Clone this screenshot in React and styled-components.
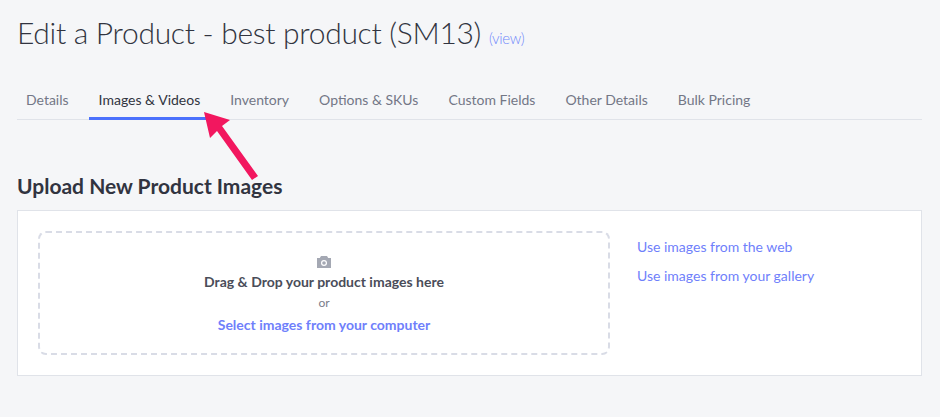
import React from 'react';
import styled, { createGlobalStyle } from 'styled-components';

const Global = createGlobalStyle`
  body { margin: 0; background: #f5f6f8; font-family: Lato, "Open Sans", sans-serif; }
`;

const tabs = ['Details', 'Images & Videos', 'Inventory', 'Options & SKUs', 'Custom Fields', 'Other Details', 'Bulk Pricing'];

const App = () => (
  <Page>
    <Global />
    <Title>
      Edit a Product - best product (SM13) <ViewLink>(view)</ViewLink>
    </Title>
    <Tabs>
      {tabs.map((t, i) => (
        <Tab key={t} active={i === 1}>{t}</Tab>
      ))}
    </Tabs>
    <Heading>Upload New Product Images</Heading>
    <Panel>
      <DropZone>
        <svg width="16" height="14" viewBox="0 0 16 14">
          <path d="M5 1h6l1.2 2H15v10H1V3h2.8z" fill="#a4a8b3" />
          <circle cx="8" cy="8" r="3" fill="#fff" />
          <circle cx="8" cy="8" r="1.8" fill="#a4a8b3" />
        </svg>
        <DropText>Drag &amp; Drop your product images here</DropText>
        <Or>or</Or>
        <BlueLink bold>Select images from your computer</BlueLink>
      </DropZone>
      <SideLinks>
        <BlueLink>Use images from the web</BlueLink>
        <BlueLink>Use images from your gallery</BlueLink>
      </SideLinks>
    </Panel>
    <Arrow width="70" height="75" viewBox="0 0 70 75">
      <path d="M4 2 L30 10 L22 16 L58 66 L52 70 L17 21 L10 28 Z" fill="#f2175f" />
    </Arrow>
  </Page>
);

const Page = styled.div`
  position: relative;
  padding: 14px 18px 0 17px;
`;

const Title = styled.h1`
  margin: 0;
  font-size: 30px;
  font-weight: 300;
  color: #313440;
  letter-spacing: -0.3px;
`;

const ViewLink = styled.span`
  font-size: 15px;
  color: #6f88fb;
`;

const Tabs = styled.div`
  display: flex;
  gap: 30px;
  margin-top: 41px;
  padding-left: 9px;
  border-bottom: 1px solid #e0e3e9;
`;

const Tab = styled.div`
  font-size: 14px;
  color: ${p => (p.active ? '#313440' : '#737786')};
  padding: 0 0 11px;
  position: relative;
  &::after {
    content: '';
    display: ${p => (p.active ? 'block' : 'none')};
    position: absolute;
    left: -10px;
    right: -10px;
    bottom: -1px;
    height: 3px;
    background: #4b71fc;
  }
`;

const Heading = styled.h2`
  margin: 53px 0 12px;
  font-size: 21px;
  font-weight: 700;
  color: #313440;
`;

const Panel = styled.div`
  display: flex;
  gap: 27px;
  background: #fff;
  border: 1px solid #e0e3e9;
  padding: 20px 20px 20px 20px;
`;

const DropZone = styled.div`
  width: 568px;
  height: 118px;
  border: 2px dashed #d9dce6;
  border-radius: 8px;
  display: flex;
  flex-direction: column;
  align-items: center;
  justify-content: center;
  padding-top: 2px;
`;

const DropText = styled.div`
  font-size: 14px;
  font-weight: 700;
  color: #4a4d59;
  margin-top: 4px;
`;

const Or = styled.div`
  font-size: 12px;
  color: #7a7e8a;
  margin: 5px 0 6px;
`;

const BlueLink = styled.div`
  font-size: 14px;
  font-weight: ${p => (p.bold ? 700 : 400)};
  color: #6f7ffb;
`;

const SideLinks = styled.div`
  display: flex;
  flex-direction: column;
  gap: 12px;
  padding-top: 7px;
`;

const Arrow = styled.svg`
  position: absolute;
  left: 200px;
  top: 110px;
`;

export default App;
